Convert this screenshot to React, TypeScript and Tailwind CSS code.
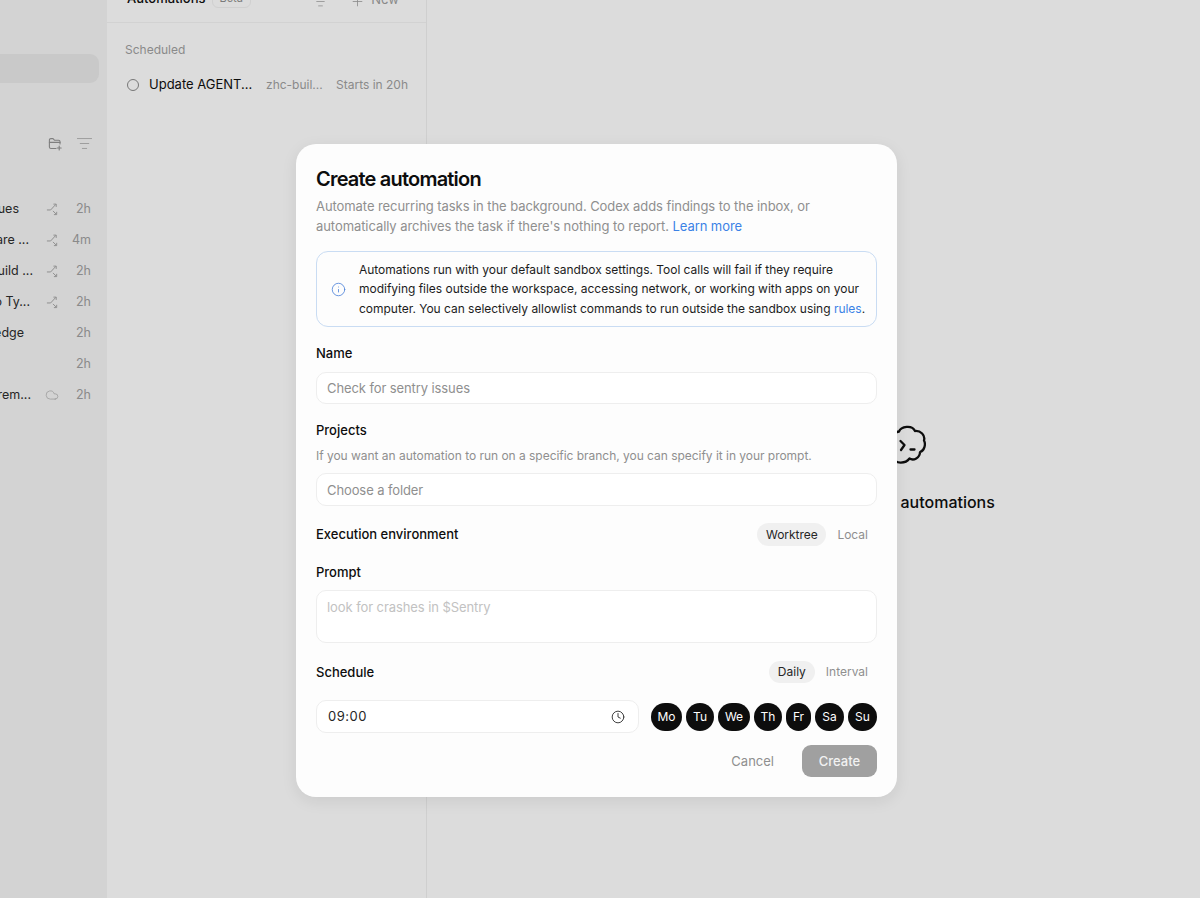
import { Clock, Cloud, Info, ListFilter, Plus } from 'lucide-react';

const threads = [
  { label: 'ues', pad: 'pr-[26px]', icon: 'fork', time: '2h' },
  { label: 'are ...', pad: 'pr-[16px]', icon: 'fork', time: '4m' },
  { label: 'uild ...', pad: 'pr-[12px]', icon: 'fork', time: '2h' },
  { label: 'o Ty...', pad: 'pr-[15px]', icon: 'fork', time: '2h' },
  { label: 'edge', pad: 'pr-[21px]', icon: '', time: '2h' },
  { label: '', pad: '', icon: '', time: '2h' },
  { label: 'rem...', pad: 'pr-[14px]', icon: 'cloud', time: '2h' },
];

const days = [
  { label: 'Mo', width: 'w-[31px]' },
  { label: 'Tu', width: 'w-[28px]' },
  { label: 'We', width: 'w-[32px]' },
  { label: 'Th', width: 'w-[28px]' },
  { label: 'Fr', width: 'w-[25px]' },
  { label: 'Sa', width: 'w-[29px]' },
  { label: 'Su', width: 'w-[29px]' },
];

function ForkIcon() {
  return (
    <svg width="13" height="13" viewBox="0 0 14 14" fill="none" stroke="#8a8a8a" strokeWidth="1" className="shrink-0">
      <path d="M1 7.5h4L10.5 1.5" />
      <path d="M8 1.2h3v3" />
      <path d="M7.5 8.5l3.5 3.5" />
      <path d="M11.5 9.5v3h-3" />
    </svg>
  );
}

function FolderAdd() {
  return (
    <svg width="14" height="14" viewBox="0 0 14 14" fill="none" stroke="#7f7f7f" strokeWidth="1.1" strokeLinecap="round" strokeLinejoin="round">
      <path d="M8 11.5H3A1.6 1.6 0 0 1 1.4 9.9V3A1.4 1.4 0 0 1 2.8 1.6H5L6.4 3.2H10.6A1.4 1.4 0 0 1 12 4.6V7" />
      <path d="M1.4 5.4H12" />
      <path d="M11.2 9V13M9.2 11H13.2" />
    </svg>
  );
}

function CodexMark() {
  return (
    <svg width="40" height="40" viewBox="0 0 40 40" fill="none" stroke="#0d0d0d" strokeWidth="2.3" strokeLinecap="round" strokeLinejoin="round">
      <path d="M13 6.5C15 1.5 26 -0.5 29 6C34.5 5.5 39.5 10 38 15.5C40 19 38.5 26 34 27C34 33 27.5 36 23.5 33.5C19.5 39 9 39 7.5 33C1 33 -1 26 2.5 21.5C-0.5 15 4.5 8 13 6.5Z" />
      <path d="M14.5 16L18.5 20L15 25" />
      <path d="M24.5 24.5H28.5" />
    </svg>
  );
}

function Segmented({ active, other, activeWidth }: { active: string; other: string; activeWidth: string }) {
  return (
    <div className="flex items-center text-[12px]">
      <div className={`flex h-full items-center justify-center rounded-full bg-[#f0f0f0] text-[#262626] ${activeWidth}`}>{active}</div>
      <div className="pr-[9px] pl-[11px] text-[#8f8f8f]">{other}</div>
    </div>
  );
}

export default function App() {
  return (
    <div className="relative flex h-[898px] w-[1200px] overflow-hidden bg-[#dcdcdc] font-['Inter',sans-serif] text-[#0d0d0d]">
      {/* sidebar, cut off by the window */}
      <aside className="flex w-[107px] shrink-0 flex-col bg-[#d3d3d3]">
        <div className="mt-[54px] mr-[8px] h-[29px] rounded-r-[9px] bg-[#c9c9c9]" />
        <div className="mt-[52px] flex items-center justify-end gap-[14px] pr-[14px] text-[#8f8f8f]">
          <FolderAdd />
          <ListFilter size={17} strokeWidth={1.1} />
        </div>
        <div className="mt-[47px] flex flex-col gap-[11px]">
          {threads.map((t, i) => (
            <div key={i} className="flex h-[20px] items-center text-[12.5px]">
              <span className={`flex w-[45px] justify-end whitespace-nowrap text-[#262626] ${t.pad}`}>{t.label}</span>
              <span className="flex w-[14px] justify-center">
                {t.icon === 'fork' && <ForkIcon />}
                {t.icon === 'cloud' && <Cloud size={14} strokeWidth={1} color="#8a8a8a" />}
              </span>
              <span className="w-[32px] text-right text-[#8a8a8a]">{t.time}</span>
            </div>
          ))}
        </div>
      </aside>

      {/* automations list */}
      <section className="w-[320px] shrink-0 border-r border-[#cfcfcf]">
        <div className="flex h-[23px] items-end justify-between border-b border-[#d2d2d2] pr-[27px] pl-[20px]">
          <div className="mb-[14px] flex items-center gap-[6px]">
            <span className="text-[13px] font-medium">Automations</span>
            <span className="rounded-[6px] border border-[#d0d0d0] px-[7px] text-[11px] text-[#7a7a7a]">Beta</span>
          </div>
          <div className="mb-[13px] flex items-center gap-[6px] text-[#8a8a8a]">
            <ListFilter size={15} strokeWidth={1.2} className="mt-[4px] mr-[16px]" />
            <Plus size={15} strokeWidth={1.3} className="mt-[4px]" />
            <span className="text-[13px]">New</span>
          </div>
        </div>
        <div className="mt-[18px] pl-[18px] text-[12px] text-[#8a8a8a]">Scheduled</div>
        <div className="mt-[16px] flex items-center pl-[20px] text-[12px]">
          <span className="h-[12px] w-[12px] rounded-full border border-[#777777]" />
          <span className="ml-[10px] w-[117px] text-[13px] whitespace-nowrap">Update AGENT...</span>
          <span className="w-[70px] whitespace-nowrap text-[#8a8a8a]">zhc-buil...</span>
          <span className="whitespace-nowrap text-[#8a8a8a]">Starts in 20h</span>
        </div>
      </section>

      {/* empty state behind the dialog */}
      <main className="flex flex-1 flex-col items-center pt-[425px] pl-[192px]">
        <div className="mr-[7px]">
          <CodexMark />
        </div>
        <div className="mt-[25px] text-[16px] font-medium whitespace-nowrap">No active automations</div>
      </main>

      {/* dialog */}
      <div className="absolute top-[144px] left-[296px] flex w-[601px] flex-col rounded-[20px] bg-[#fdfdfd] px-[20px] pt-[20px] pb-[20px] shadow-[0_4px_16px_rgba(0,0,0,0.08)]">
        <h1 className="h-[28px] pt-px text-[20px] leading-[28px] font-semibold tracking-[-0.8px]">Create automation</h1>
        <p className="mt-[4px] text-[13px] leading-[20px] tracking-[-0.07px] text-[#8f8f8f]">
          Automate recurring tasks in the background. Codex adds findings to the inbox, or
          <br />
          automatically archives the task if there's nothing to report. <span className="text-[#3b82e6]">Learn more</span>
        </p>

        <div className="mt-[15px] flex h-[76px] items-center rounded-[12px] border border-[#c9dcf3] pr-[10px] pl-[14px]">
          <Info size={15} strokeWidth={1.3} color="#4a80d9" className="shrink-0" />
          <p className="ml-[13px] text-[12px] leading-[19.5px] tracking-[-0.02px] whitespace-nowrap text-[#1c1c1c]">
            Automations run with your default sandbox settings. Tool calls will fail if they require
            <br />
            modifying files outside the workspace, accessing network, or working with apps on your
            <br />
            computer. You can selectively allowlist commands to run outside the sandbox using <span className="text-[#3b82e6]">rules</span>.
          </p>
        </div>

        <label className="mt-[16px] h-[20px] text-[13px] leading-[20px] font-medium">Name</label>
        <div className="mt-[9px] flex h-[32px] items-center rounded-[10px] border border-[#eeeeee] bg-white px-[10px] pt-px text-[13px] tracking-[-0.1px] text-[#8f8f8f]">
          Check for sentry issues
        </div>

        <label className="mt-[16px] h-[20px] text-[13px] leading-[20px] font-medium">Projects</label>
        <div className="mt-[6px] h-[20px] text-[12px] leading-[20px] tracking-[-0.03px] text-[#8f8f8f]">
          If you want an automation to run on a specific branch, you can specify it in your prompt.
        </div>
        <div className="mt-[7px] flex h-[33px] items-center rounded-[10px] border border-[#eeeeee] bg-white px-[10px] pt-[2px] text-[13px] tracking-[-0.1px] text-[#8f8f8f]">
          Choose a folder
        </div>

        <div className="mt-[17px] flex h-[23px] items-stretch justify-between">
          <span className="self-center pt-px text-[13px] font-medium">Execution environment</span>
          <Segmented active="Worktree" other="Local" activeWidth="w-[69px]" />
        </div>

        <label className="mt-[16px] h-[20px] text-[13px] leading-[20px] font-medium">Prompt</label>
        <div className="mt-[8px] h-[53px] rounded-[10px] border border-[#eeeeee] bg-white px-[10px] pt-[7px] text-[13px] tracking-[-0.08px] text-[#c2c2c2]">
          look for crashes in $Sentry
        </div>

        <div className="mt-[18px] flex h-[22px] items-stretch justify-between">
          <span className="self-center pt-px text-[13px] font-medium">Schedule</span>
          <Segmented active="Daily" other="Interval" activeWidth="w-[46px]" />
        </div>

        <div className="mt-[17px] flex h-[33px] items-center justify-between">
          <div className="flex h-full w-[323px] items-center justify-between rounded-[10px] border border-[#eeeeee] bg-white pr-[13px] pl-[11px] text-[13px] tracking-[0.5px] text-[#262626]">
            09:00
            <Clock size={14} strokeWidth={1.6} color="#333333" />
          </div>
          <div className="flex items-center gap-[4px]">
            {days.map((d) => (
              <div key={d.label} className={`flex h-[28px] items-center justify-center rounded-full bg-[#0d0d0d] text-[12px] text-white ${d.width}`}>
                {d.label}
              </div>
            ))}
          </div>
        </div>

        <div className="mt-[12px] flex h-[32px] items-center justify-end gap-[28px] text-[13px]">
          <span className="pt-px text-[#8f8f8f]">Cancel</span>
          <div className="flex h-full w-[75px] items-center justify-center rounded-[9px] bg-[#a0a0a0] pt-px font-medium text-[#f2f2f2]">Create</div>
        </div>
      </div>
    </div>
  );
}
